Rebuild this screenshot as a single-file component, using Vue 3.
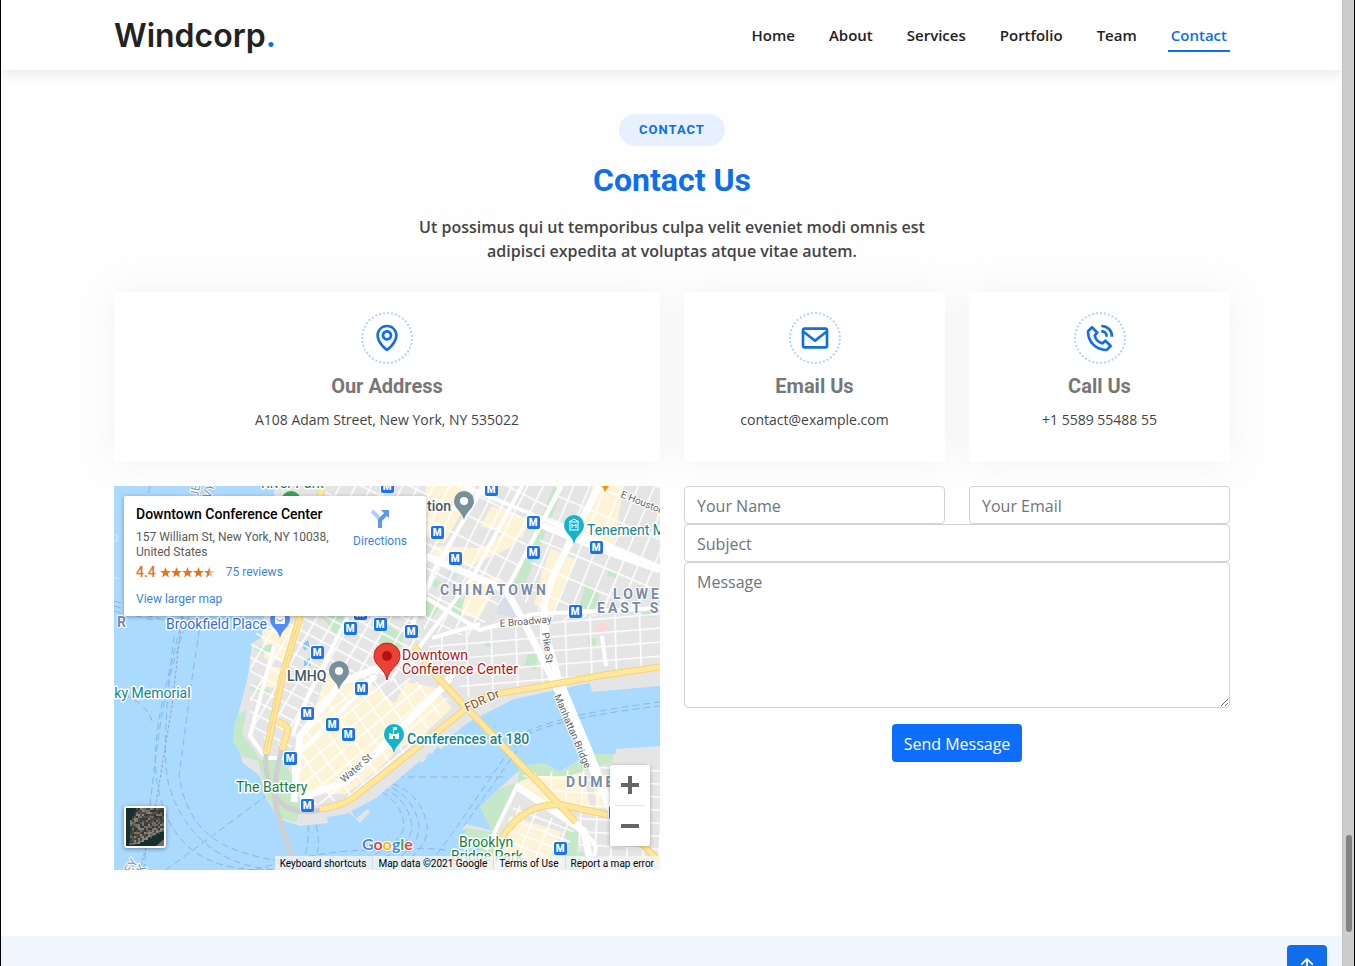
<script setup>
import { ref } from 'vue'

const links = ['Home', 'About', 'Services', 'Portfolio', 'Team', 'Contact']
const active = ref('Contact')

const infoCards = [
  {
    title: 'Our Address',
    text: 'A108 Adam Street, New York, NY 535022',
    paths: [
      'M12 14c2.206 0 4-1.794 4-4s-1.794-4-4-4-4 1.794-4 4 1.794 4 4 4zm0-6c1.103 0 2 .897 2 2s-.897 2-2 2-2-.897-2-2 .897-2 2-2z',
      'M11.42 21.814a.998.998 0 0 0 1.16 0C12.884 21.599 20.029 16.44 20 10c0-4.411-3.589-8-8-8S4 5.589 4 9.995c-.029 6.445 7.116 11.604 7.42 11.819zM12 4c3.309 0 6 2.691 6 6.005.021 4.438-4.388 8.423-6 9.73-1.611-1.308-6.021-5.294-6-9.735 0-3.309 2.691-6 6-6z',
    ],
  },
  {
    title: 'Email Us',
    text: 'contact@example.com',
    paths: [
      'M20 4H4c-1.103 0-2 .897-2 2v12c0 1.103.897 2 2 2h16c1.103 0 2-.897 2-2V6c0-1.103-.897-2-2-2zm0 2v.511l-8 6.223-8-6.222V6h16zM4 18V9.044l7.386 5.745a.994.994 0 0 0 1.228 0L20 9.044 20.002 18H4z',
    ],
  },
  {
    title: 'Call Us',
    text: '+1 5589 55488 55',
    paths: [
      'M16.57 22a2 2 0 0 0 1.43-.59l2.71-2.71a1 1 0 0 0 0-1.41l-4-4a1 1 0 0 0-1.41 0l-1.6 1.59a7.55 7.55 0 0 1-3-1.59 7.62 7.62 0 0 1-1.59-3l1.59-1.6a1 1 0 0 0 0-1.41l-4-4a1 1 0 0 0-1.41 0L2.59 6A2 2 0 0 0 2 7.43 15.28 15.28 0 0 0 6.3 17.7 15.28 15.28 0 0 0 16.57 22zM6 5.41 8.59 8 7.3 9.29a1 1 0 0 0-.3.91 10.12 10.12 0 0 0 2.3 4.5 10.08 10.08 0 0 0 4.5 2.3 1 1 0 0 0 .91-.27L16 15.41 18.59 18l-2 2a13.28 13.28 0 0 1-8.87-3.71A13.28 13.28 0 0 1 4 7.41zM20 11h2a8.81 8.81 0 0 0-9-9v2a6.77 6.77 0 0 1 7 7z',
      'M13 8c2.1 0 3 .9 3 3h2c0-3.22-1.78-5-5-5z',
    ],
  },
]

/* subway stations on the map */
const stations = [
  [273, 0], [377, 3], [323, 46], [341, 72], [419, 36], [419, 66], [482, 61], [461, 125],
  [246, 127], [236, 142], [266, 138], [297, 145], [203, 166], [247, 202], [193, 227],
  [218, 238], [234, 248], [176, 272], [193, 319], [446, 362], [501, 326],
]

const labels = [
  { t: 'River Park', x: 147, y: 2, c: 'green' },
  { t: 'tion', x: 313, y: 25, c: 'slate' },
  { t: 'Tenement M', x: 473, y: 49, c: 'teal' },
  { t: 'CHINATOWN', x: 326, y: 109, c: 'area' },
  { t: 'LOWER', x: 499, y: 113, c: 'area' },
  { t: 'EAST SIDE', x: 483, y: 127, c: 'area' },
  { t: 'DUMBO', x: 452, y: 301, c: 'area' },
  { t: 'Brookfield Place', x: 52, y: 143, c: 'blue' },
  { t: 'LMHQ', x: 173, y: 195, c: 'slate' },
  { t: 'Downtown', x: 288, y: 174, c: 'red' },
  { t: 'Conference Center', x: 288, y: 188, c: 'red' },
  { t: 'Sky Memorial', x: -8, y: 212, c: 'teal' },
  { t: 'Conferences at 180', x: 293, y: 258, c: 'teal bold' },
  { t: 'The Battery', x: 122, y: 306, c: 'green' },
  { t: 'Brooklyn', x: 345, y: 361, c: 'green' },
  { t: 'Bridge Park', x: 337, y: 375, c: 'green' },
  { t: 'R', x: 3, y: 141, c: 'area' },
]

const streets = [
  { t: 'E Houston St', x: 506, y: 11, r: 22 },
  { t: 'E Broadway', x: 386, y: 141, r: -5 },
  { t: 'Pike St', x: 428, y: 147, r: 82 },
  { t: 'Manhattan Bridge', x: 440, y: 210, r: 67 },
  { t: 'Water St', x: 230, y: 297, r: -41 },
  { t: 'FDR Dr', x: 353, y: 226, r: -25, c: 'highway' },
  { t: 'JE', x: 84, y: 12, r: -80, c: 'border' },
  { t: 'VY', x: 96, y: 13, r: -70, c: 'border' },
  { t: 'EY', x: 17, y: 388, r: -60, c: 'border' },
  { t: 'K', x: 29, y: 388, r: -60, c: 'border' },
]

/* speckled rooftops of the satellite thumbnail */
const tones = ['#6f6a62', '#4b4a47', '#8a8274', '#39403e', '#5d5148', '#2f3a38', '#777167']
let seed = 11
const nextTone = () => {
  seed = (seed * 48271) % 2147483647
  return tones[seed % tones.length]
}
const roofs = Array.from({ length: 324 }, (_, i) => {
  const x = (i % 18) * 2 + 2
  const y = Math.floor(i / 18) * 2
  return { x, y, fill: nextTone() }
}).filter((r) => r.y < 36 - Math.max(0, r.x - 10) * 0.5 && r.x > 3 + Math.max(0, 12 - r.y) / 2)
</script>

<template>
  <div class="window">
    <div class="page">
      <header class="header">
        <div class="container bar">
          <a href="#" class="logo">Windcorp<span>.</span></a>
          <nav class="nav">
            <a
              v-for="l in links"
              :key="l"
              href="#"
              :class="{ active: active === l }"
              @click.prevent="active = l"
            >{{ l }}</a>
          </nav>
        </div>
      </header>

      <main class="container contact">
        <div class="intro">
          <span class="pill">Contact</span>
          <h1>Contact Us</h1>
          <p>Ut possimus qui ut temporibus culpa velit eveniet modi omnis est adipisci expedita at voluptas atque vitae autem.</p>
        </div>

        <div class="grid">
          <section v-for="c in infoCards" :key="c.title" class="info">
            <div class="ring">
              <svg viewBox="0 0 24 24" aria-hidden="true"><path v-for="d in c.paths" :key="d" :d="d" /></svg>
            </div>
            <h2>{{ c.title }}</h2>
            <p>{{ c.text }}</p>
          </section>

          <div class="map">
            <svg class="canvas" viewBox="0 0 546 384" preserveAspectRatio="xMidYMid slice" aria-label="Map of Lower Manhattan">
              <defs>
                <pattern id="soho" width="14" height="22" patternUnits="userSpaceOnUse" patternTransform="matrix(.89 .45 -.45 .89 6 0)">
                  <path d="M0 0H14M0 0V22" class="minor" />
                </pattern>
                <pattern id="les" width="15" height="24" patternUnits="userSpaceOnUse" patternTransform="matrix(.92 .39 -.38 .92 3 4)">
                  <path d="M0 0H15M0 0V24" class="minor" />
                </pattern>
                <pattern id="river" width="25" height="14" patternUnits="userSpaceOnUse" patternTransform="matrix(.99 -.08 .03 1 0 3)">
                  <path d="M0 0H25M0 0V14" class="minor" />
                </pattern>
                <pattern id="tribeca" width="16" height="12" patternUnits="userSpaceOnUse" patternTransform="matrix(.88 .47 -.5 .86 0 3)">
                  <path d="M0 0H16M0 0V12" class="minor" />
                </pattern>
                <pattern id="wall" width="17" height="13" patternUnits="userSpaceOnUse" patternTransform="matrix(.77 -.64 .57 .82 0 0)">
                  <path d="M0 0H17M0 0V13" class="minor" />
                </pattern>
                <pattern id="dumbo" width="16" height="13" patternUnits="userSpaceOnUse" patternTransform="matrix(1 .06 -.06 1 4 4)">
                  <path d="M0 0H16M0 0V13" class="minor" />
                </pattern>
                <pattern id="heights" width="17" height="11" patternUnits="userSpaceOnUse" patternTransform="matrix(.93 .36 -.38 .92 4 4)">
                  <path d="M0 0H17M0 0V11" class="minor" />
                </pattern>
              </defs>

              <rect width="546" height="384" fill="#aadaff" />

              <!-- ferry routes -->
              <g class="ferry">
                <path d="M75 130C48 200 43 260 36 320L30 384" />
                <path d="M69 130C55 190 38 240 42 290C50 345 75 384 150 384" />
                <path d="M60 150C52 220 48 270 55 300C70 350 110 384 170 384" />
                <path d="M92 100L78 192L65 290C75 350 110 366 170 376L220 384" />
                <path d="M0 115L48 128L78 134" />
                <path d="M0 120L45 133L75 140" />
                <path d="M0 125L40 134" />
                <path d="M36 0L18 80L28 120" />
                <path d="M0 205Q32 215 38 235" />
                <path d="M52 384L152 310" />
                <path d="M272 291H393" />
                <path d="M202 339Q210 370 192 384" />
                <path d="M194 339Q196 365 184 384" />
                <path d="M412 246Q450 228 546 216" />
                <path d="M412 249Q450 231 546 220" />
                <path d="M412 248L388 275L340 345L320 372" />
                <path d="M416 246L392 280L350 340" />
                <path d="M268 294Q308 305 313 340Q314 370 270 384" />
                <path d="M268 298Q300 308 305 340Q306 365 262 384" />
                <path d="M268 302Q294 312 298 340Q298 360 255 380" />
                <path d="M268 306Q288 318 290 340Q288 358 248 374" />
                <path d="M140 384Q220 360 275 365Q340 355 390 384" />
              </g>
              <path d="M68 130L58 220L40 330L26 384" class="state" />
              <path d="M0 49H3V55H0M0 91L5 93" stroke="#e5e5e5" fill="none" />

              <!-- land -->
              <path class="land" d="M160 0H546V200L478 206L476 197L400 213L355 236L300 280L262 312L232 328L213 331L214 337L186 340L165 333L152 312L146 290L128 276L122 240L125 225L134 190L138 157L150 150V130L162 70Z" />
              <path class="land" d="M292 246L313 272L308 277L286 252ZM302 243L322 262L318 268L296 248ZM325 227L337 257L326 263L312 242ZM233 318L242 333L253 323L256 326L246 337L242 333L228 320Z" />
              <path class="land" d="M360 384L375 351L348 343L352 338L380 345L366 321L390 298L406 284L430 277L445 286L476 268H502V263L546 260V384Z" />

              <!-- commercial blocks -->
              <g class="cream">
                <path d="M312 0H362L330 58L312 50Z" />
                <path d="M320 60L368 62L412 30L400 60L356 80L318 74Z" />
                <path d="M378 20L416 34L408 52L366 40Z" />
                <path d="M356 90L388 92L365 132L342 128L354 108Z" />
                <path d="M436 62L462 74L436 128L420 118Z" />
                <path d="M478 0H510L498 70L464 56Z" />
                <path d="M428 84L452 90L440 128L424 112Z" />
                <path d="M148 145L190 138L174 176L150 172Z" />
                <path d="M213 188L258 198L306 240L264 284L232 308H188L182 262L196 236Z" />
                <path d="M292 196L322 202L338 222L304 254L268 270L262 252Z" />
                <path d="M156 180L178 184L168 204L150 200Z" />
                <path d="M410 286H470L476 322L430 320L404 300Z" />
                <path d="M396 330L448 346L430 384H382Z" />
                <path d="M478 288L508 290V324L482 320Z" />
              </g>

              <g class="park">
                <path d="M440 0H450L412 96L400 98L420 50Z" />
                <path d="M208 130L226 128L236 140L222 150Z" />
                <path d="M268 134L290 150L284 170L264 156Z" />
                <path d="M312 112L328 118L318 132H312Z" />
                <path d="M339 108L350 114L346 134L338 128Z" />
                <path d="M318 92L327 96L322 102L316 98Z" />
                <path d="M472 96L486 110L478 130L466 118Z" />
                <path d="M494 84L504 88L502 92L494 90Z" />
                <path d="M414 168H424L422 184L410 180Z" />
                <path d="M474 152H482V159H475Z" />
                <path d="M371 158L378 156V162L371 160Z" />
                <path d="M464 366H470V376H464Z" />
                <path d="M528 124L540 122L538 131L528 130Z" />
                <path d="M140 162L158 158L160 166L146 167ZM136 199L156 204L155 209L136 203Z" />
                <path d="M125 228L133 224L128 247L148 276L128 270L119 256Q118 238 125 228Z" />
                <path d="M144 274H168L180 292L190 314L182 336L165 332L152 310Z" />
                <path d="M405 280L430 277L446 286L476 268H500L498 276L455 290H420L404 296Z" />
                <path d="M385 303L402 297L386 332L378 352L386 358L374 384H360L366 360L350 348L352 342L378 346L366 321Z" />
                <path d="M448 338L464 346L462 384H448L454 358Z" />
              </g>
              <path d="M482 138L492 136L496 144L480 147ZM274 168L284 172L280 186L272 180Z" fill="#f9d9d9" />
              <path d="M382 128L390 104L400 118L404 132ZM336 82L344 88L338 100L330 96Z" fill="#d8dfe8" />
              <path d="M188 158L194 154L196 162L190 164ZM190 174L196 172L197 180L190 180Z" fill="#8fc5fb" />

              <!-- street grids -->
              <path fill="url(#soho)" d="M205 0H446L396 104L360 150L312 146L300 128L205 60Z" />
              <path fill="url(#les)" d="M446 0H546V124L440 134L404 112Z" />
              <path fill="url(#river)" d="M312 150L404 134L546 126V184L420 204L360 216L318 172Z" />
              <path fill="url(#tribeca)" d="M150 130H300L312 172L280 196L212 196L176 264L136 248L136 160Z" />
              <path fill="url(#wall)" d="M212 194L284 186L336 214L300 262L244 310L188 322L182 262Z" />
              <path fill="url(#dumbo)" d="M408 288L546 276V384H468L462 330L430 314Z" />
              <path fill="url(#heights)" d="M400 318L462 340L446 384H378Z" />

              <!-- major streets -->
              <g class="major">
                <path d="M408 0L358 92L300 168" />
                <path d="M312 70L392 104L412 140L440 196L480 286L500 330" class="wide" />
                <path d="M392 104L448 0" />
                <path d="M485 0L440 88L430 118L432 150L446 198" class="wide" />
                <path d="M370 0L320 84L298 140" />
                <path d="M420 36L460 52L500 68L546 84" class="wide" />
                <path d="M350 0L546 82" />
                <path d="M312 112L366 144L420 128L546 122" />
                <path d="M318 152L366 138" />
                <path d="M300 168L228 196L186 250L180 316" class="wide" />
                <path d="M262 190L180 272V312" />
                <path d="M186 312L232 296L330 200L344 180" class="wide" />
                <path d="M160 160L136 250L152 272H176" />
                <path d="M234 130L194 210L178 250" />
                <path d="M404 298L372 364" />
                <path d="M402 300L470 345L478 384" class="wide" />
                <path d="M458 330L482 360L478 384" />
                <path d="M488 150L492 180" />
                <path d="M448 200L474 262L500 330" class="wide" />
              </g>

              <!-- tunnel -->
              <path d="M152 268Q150 298 166 316Q182 330 206 324" class="tunnel" />
              <path d="M168 262Q158 300 162 322L178 372" class="tunnel" />

              <!-- highways -->
              <g class="casing">
                <path d="M208 0L186 130L168 192L152 268" />
                <path d="M206 323Q226 320 236 314L272 286L348 226Q360 212 388 207L440 198L490 189L546 181" />
                <path d="M300 160L324 192L462 336" />
                <path d="M374 384L388 352Q410 316 448 319L500 330L546 376" />
                <path d="M164 236Q178 240 172 250L168 264" />
              </g>
              <g class="highway">
                <path d="M208 0L186 130L168 192L152 268" />
                <path d="M206 323Q226 320 236 314L272 286L348 226Q360 212 388 207L440 198L490 189L546 181" />
                <path d="M300 160L324 192L462 336" />
                <path d="M374 384L388 352Q410 316 448 319L500 330L546 376" />
                <path d="M164 236Q178 240 172 250L168 264" />
              </g>
              <path d="M185 134L167 194L152 266" class="lane" />

              <circle cx="177" cy="15" r="10" fill="#34a853" />

              <g class="streets">
                <text v-for="s in streets" :key="s.t" :class="s.c" :transform="`translate(${s.x} ${s.y}) rotate(${s.r})`">{{ s.t }}</text>
              </g>

              <!-- subway stations -->
              <g v-for="(s, i) in stations" :key="i" :transform="`translate(${s[0]} ${s[1]})`">
                <rect x="-7" y="-7" width="14" height="14" rx="3" fill="#fff" />
                <rect x="-6" y="-6" width="13" height="13" rx="2" fill="#1a73e8" />
                <text x="0" y="4" class="metro">M</text>
              </g>

              <!-- place pins -->
              <g transform="translate(350 15)">
                <path d="M0 19C-2 10-10 8-10 0A10 10 0 0 1 10 0C10 8 2 10 0 19Z" fill="#78909c" /><circle r="4" fill="#fff" />
              </g>
              <g transform="translate(225 185)">
                <path d="M0 19C-2 10-10 8-10 0A10 10 0 0 1 10 0C10 8 2 10 0 19Z" fill="#78909c" /><circle r="4" fill="#fff" />
              </g>
              <g transform="translate(460 39)">
                <path d="M0 19C-2 10-10 8-10 0A10 10 0 0 1 10 0C10 8 2 10 0 19Z" fill="#12b5cb" />
                <path d="M-5 -3L0 -6L5 -3ZM-5 5H5M-4 -2V4M4 -2V4M-2 3V-1L0 1L2 -1V3" fill="none" stroke="#fff" />
              </g>
              <g transform="translate(280 248)">
                <path d="M0 19C-2 10-10 8-10 0A10 10 0 0 1 10 0C10 8 2 10 0 19Z" fill="#12b5cb" />
                <path d="M-5 5V-1H-3V0H-1V-7H3V-4H0V0H3V-1H5V5H1V2H-1V5Z" fill="#fff" />
              </g>
              <g transform="translate(166 133)">
                <path d="M0 19C-2 10-10 8-10 0A10 10 0 0 1 10 0C10 8 2 10 0 19Z" fill="#4f8df7" />
                <rect x="-5" y="-3" width="10" height="8" rx="1" fill="#fff" />
                <path d="M-3 0Q0 4 3 0" fill="none" stroke="#4f8df7" />
              </g>
              <path d="M488 0H495L491 6Z" fill="#f29900" />
              <g transform="translate(273 170)">
                <path d="M0 24C-2 12-13 10-13 0A13 13 0 0 1 13 0C13 10 2 12 0 24Z" fill="#ea4335" stroke="#c5221f" />
                <circle r="5" fill="#b31412" />
              </g>

              <g class="labels">
                <text v-for="l in labels" :key="l.t" :x="l.x" :y="l.y" :class="l.c">{{ l.t }}</text>
              </g>
              <text x="248" y="364" class="brand"><tspan fill="#4285f4">G</tspan><tspan fill="#ea4335">o</tspan><tspan fill="#fbbc04">o</tspan><tspan fill="#4285f4">g</tspan><tspan fill="#34a853">l</tspan><tspan fill="#ea4335">e</tspan></text>
            </svg>

            <div class="place">
              <div class="details">
                <h3>Downtown Conference Center</h3>
                <address>157 William St, New York, NY 10038,<br>United States</address>
                <div class="rating">
                  <b>4.4</b>
                  <svg viewBox="0 0 55 11" role="img" aria-label="4.4 out of 5 stars">
                    <g v-for="n in 5" :key="n" :transform="`translate(${(n - 1) * 11} 0)`">
                      <path d="M5.500 0L6.900 3.900H11L7.700 6.400L8.900 10.500L5.500 8L2.100 10.500L3.300 6.400L0 3.900H4.100Z" :fill="n < 5 ? '#e7711b' : '#ccc'" />
                      <path v-if="n === 5" d="M5.500 0V8L2.100 10.500L3.300 6.400L0 3.900H4.100Z" fill="#e7711b" />
                    </g>
                  </svg>
                  <a href="#">75 reviews</a>
                </div>
                <a href="#" class="larger">View larger map</a>
              </div>
              <a href="#" class="directions">
                <svg viewBox="0 0 22 22" aria-hidden="true">
                  <path d="M3 4L11 12" stroke="#b4d0f5" stroke-width="4" />
                  <path d="M11 21V13L17 7" stroke="#5c9ae8" stroke-width="4" fill="none" />
                  <path d="M12 3H20V11Z" fill="#5c9ae8" />
                </svg>
                Directions
              </a>
            </div>

            <button type="button" class="satellite" aria-label="Show satellite imagery">
              <svg viewBox="0 0 38 38" preserveAspectRatio="none">
                <rect width="38" height="38" fill="#15302f" />
                <rect v-for="(r, i) in roofs" :key="i" :x="r.x" :y="r.y" width="2" height="2" :fill="r.fill" />
                <path d="M3 36Q12 37 20 30L38 21" stroke="#9c9585" fill="none" />
                <path d="M30 38L38 31V38Z" fill="#746b60" />
              </svg>
            </button>

            <div class="zoom">
              <button type="button" aria-label="Zoom in"><svg viewBox="0 0 18 18"><path d="M0 9H18M9 0V18" /></svg></button>
              <button type="button" aria-label="Zoom out"><svg viewBox="0 0 18 18"><path d="M0 9H18" /></svg></button>
            </div>

            <div class="credits">
              <a href="#">Keyboard shortcuts</a>
              <span>Map data ©2021 Google</span>
              <a href="#">Terms of Use</a>
              <a href="#">Report a map error</a>
            </div>
          </div>

          <form class="form" @submit.prevent>
            <div class="pair">
              <input type="text" placeholder="Your Name" aria-label="Your Name">
              <input type="email" placeholder="Your Email" aria-label="Your Email">
            </div>
            <input type="text" placeholder="Subject" aria-label="Subject">
            <textarea rows="5" placeholder="Message" aria-label="Message"></textarea>
            <button type="submit">Send Message</button>
          </form>
        </div>
      </main>

      <footer class="footer">
        <a href="#" class="top" aria-label="Back to top">
          <svg viewBox="0 0 16 16"><path d="M8 12a.5.5 0 0 0 .5-.5V5.707l2.146 2.147a.5.5 0 0 0 .708-.708l-3-3a.5.5 0 0 0-.708 0l-3 3a.5.5 0 1 0 .708.708L7.500 5.707V11.500a.5.5 0 0 0 .5.5z" /></svg>
        </a>
      </footer>
    </div>
    <div class="track"><div class="thumb"></div></div>
  </div>
</template>

<style>
body {
  margin: 0;
}
</style>

<style scoped>
* {
  box-sizing: border-box;
}
.window {
  display: flex;
  height: 100vh;
  overflow: hidden;
  border: solid #000;
  border-width: 0 1px;
  font-family: "Open Sans", sans-serif;
  color: #444;
  background: #fefefe;
}
.page {
  flex: 1;
  min-width: 0;
}
.track {
  flex: none;
  display: flex;
  align-items: flex-end;
  justify-content: center;
  width: 12px;
  padding-bottom: 34px;
  background: #cdcdcd;
  border-left: 1px solid #c4bfbb;
  position: relative;
}
.thumb {
  width: 6px;
  height: 97px;
  border-radius: 3px;
  background: #7f8383;
}
a {
  text-decoration: none;
}
h1, h2, h3, p {
  margin: 0;
}
.container {
  max-width: 1141px;
  margin: 0 auto;
  padding: 0 12px 0 13px;
}

.header {
  position: relative;
  background: #fff;
  box-shadow: 0 2px 15px rgba(0, 0, 0, 0.1);
}
.bar {
  display: flex;
  align-items: center;
  justify-content: space-between;
  height: 70px;
}
.logo {
  padding-top: 2px;
  font: 600 32px/40px Inter, sans-serif;
  color: #222;
}
.logo span {
  color: #106eea;
}
.nav {
  display: flex;
  gap: 28px;
}
.nav a {
  padding: 4px 3px 3px;
  border-bottom: 2px solid transparent;
  font-size: 15px;
  line-height: 24px;
  font-weight: 600;
  color: #222;
}
.nav a.active {
  color: #106eea;
  border-color: #106eea;
}

.contact {
  padding-top: 44px;
  padding-bottom: 66px;
}
.intro {
  display: flex;
  flex-direction: column;
  align-items: center;
  text-align: center;
}
.pill {
  padding: 8px 20px;
  border-radius: 50px;
  background: #e7f1fd;
  color: #106eea;
  font: 700 13px/16px Roboto, sans-serif;
  letter-spacing: 1px;
  text-transform: uppercase;
}
.intro h1 {
  margin: 15px 0 16px;
  font: 700 32px/38px Roboto, sans-serif;
  color: #106eea;
}
.intro p {
  max-width: 558px;
  font-size: 16px;
  line-height: 24px;
  font-weight: 600;
}

.grid {
  display: grid;
  grid-template-columns: repeat(4, minmax(0, 1fr));
  gap: 24px;
  margin-top: 29px;
}
.info {
  display: flex;
  flex-direction: column;
  align-items: center;
  padding: 20px 0 30px;
  background: #fff;
  box-shadow: 0 0 30px rgba(214, 215, 216, 0.3);
}
.info:first-child,
.map,
.form {
  grid-column: span 2;
}
.ring {
  display: grid;
  place-items: center;
  width: 52px;
  height: 52px;
  border: 2px dotted #b3d1fa;
  border-radius: 50%;
}
.ring svg {
  width: 32px;
  height: 32px;
  fill: #106eea;
}
.info h2 {
  margin: 10px 0;
  font: 700 20px/24px Roboto, sans-serif;
  color: #777;
}
.info p {
  font-size: 14px;
  line-height: 24px;
}

.map {
  position: relative;
  height: 384px;
  overflow: hidden;
  font-family: Roboto, sans-serif;
}
.canvas {
  display: block;
  width: 100%;
  height: 100%;
}
.land { fill: #e5e5e5; }
.cream path { fill: #fdf3d7; }
.park path { fill: #c5e8c8; }
.minor { stroke: #fff; stroke-width: 3; fill: none; }
.major path { stroke: #fff; stroke-width: 4; fill: none; stroke-linejoin: round; }
.major .wide { stroke-width: 7; }
.tunnel { stroke: #cfcfcf; stroke-width: 5; fill: none; }
.casing path { stroke: #f8d276; stroke-width: 7; fill: none; stroke-linejoin: round; }
.highway path { stroke: #ffe89c; stroke-width: 5; fill: none; stroke-linejoin: round; }
.lane { stroke: #f6d583; fill: none; }
.ferry path { stroke: #86b7ee; fill: none; stroke-dasharray: 7 4; }
.state { stroke: #9aa3ad; fill: none; stroke-dasharray: 3 2; }
.metro {
  font-size: 10px;
  font-weight: 900;
  text-anchor: middle;
  fill: #fff;
}
.labels text,
.streets text {
  paint-order: stroke;
  stroke: #fff;
  stroke-width: 3px;
  stroke-linejoin: round;
}
.labels text { font-size: 14px; }
.labels .area {
  font-weight: 700;
  letter-spacing: 3px;
  fill: #7b8ba5;
  stroke-width: 2px;
}
.labels .teal { fill: #12858d; }
.labels .bold { font-weight: 500; }
.labels .green { fill: #188038; }
.labels .slate { fill: #455a64; font-weight: 500; }
.labels .blue { fill: #3072d9; }
.labels .red { fill: #b31412; }
.streets text { font-size: 10px; fill: #5f6368; stroke-width: 2px; }
.streets .highway { font-size: 12px; fill: #7a4a1e; }
.streets .border { font-size: 12px; fill: #8c949e; }
.brand {
  font: 700 16px Lato, sans-serif;
  paint-order: stroke;
  stroke: #fff;
  stroke-width: 2px;
}

.place {
  position: absolute;
  top: 10px;
  left: 10px;
  display: flex;
  justify-content: space-between;
  width: 302px;
  height: 120px;
  padding: 9px 19px 9px 12px;
  border-radius: 2px;
  background: #fff;
  box-shadow: 0 1px 4px rgba(0, 0, 0, 0.3);
  font-size: 12px;
  line-height: 15px;
  color: #5b5b5b;
}
.place h3 {
  margin-bottom: 7px;
  font-size: 14px;
  line-height: 18px;
  font-weight: 500;
  color: #000;
}
.place address {
  font-style: normal;
  white-space: nowrap;
}
.place a {
  color: #3a84df;
}
.rating {
  display: flex;
  align-items: center;
  height: 16px;
  margin: 4px 0 12px;
}
.rating b {
  font-size: 14px;
  font-weight: 500;
  color: #e7711b;
}
.rating svg {
  width: 55px;
  height: 11px;
  margin: 0 11px 0 4px;
}
.directions {
  display: flex;
  flex-direction: column;
  align-items: center;
  gap: 5px;
  padding-top: 2px;
}
.directions svg {
  width: 22px;
  height: 22px;
}

.satellite {
  position: absolute;
  left: 10px;
  bottom: 22px;
  width: 42px;
  height: 42px;
  padding: 0;
  border: 2px solid #fff;
  border-radius: 3px;
  background: #fff;
  box-shadow: 0 1px 4px rgba(0, 0, 0, 0.4);
}
.satellite svg {
  display: block;
  width: 38px;
  height: 38px;
}
.zoom {
  position: absolute;
  right: 10px;
  bottom: 24px;
  width: 40px;
  border-radius: 2px;
  background: #fff;
  box-shadow: 0 1px 4px rgba(0, 0, 0, 0.3);
}
.zoom button {
  display: grid;
  place-items: center;
  width: 30px;
  height: 40px;
  margin: 0 5px;
  padding: 0;
  border: 0;
  background: none;
}
.zoom button + button {
  height: 41px;
  border-top: 1px solid #e6e6e6;
}
.zoom svg {
  width: 18px;
  height: 18px;
}
.zoom path {
  stroke: #666;
  stroke-width: 4;
}
.credits {
  position: absolute;
  right: 0;
  bottom: 0;
  display: flex;
  font-size: 10px;
  line-height: 12px;
  background: rgba(245, 245, 245, 0.8);
}
.credits > * {
  padding: 2px 6px 0 5px;
  color: #000;
  white-space: nowrap;
}
.credits > * + * {
  border-left: 1px solid #dcdcdc;
}

.form input,
.form textarea {
  display: block;
  width: 100%;
  height: 38px;
  margin: 0;
  padding: 7px 12px 5px;
  border: 1px solid #ced4da;
  border-radius: 4px;
  background: #fff;
  font: 16px/24px "Open Sans", sans-serif;
  color: #212529;
}
.form textarea {
  height: 146px;
  resize: vertical;
}
.form ::placeholder {
  color: #6c757d;
  opacity: 1;
}
.pair {
  display: grid;
  grid-template-columns: 1fr 1fr;
  gap: 24px;
}
.form button {
  display: block;
  margin: 16px auto 0;
  padding: 8px 12px 6px;
  border: 0;
  border-radius: 4px;
  background: #0d6efd;
  font: 16px/24px "Open Sans", sans-serif;
  color: #fff;
}

.footer {
  display: flex;
  justify-content: flex-end;
  align-items: flex-start;
  height: 200px;
  padding: 9px 15px;
  background: #f1f6fe;
}
.top {
  display: grid;
  place-items: center;
  width: 40px;
  height: 40px;
  border-radius: 4px;
  background: #106eea;
}
.top svg {
  width: 28px;
  height: 28px;
  fill: #fff;
}
</style>
